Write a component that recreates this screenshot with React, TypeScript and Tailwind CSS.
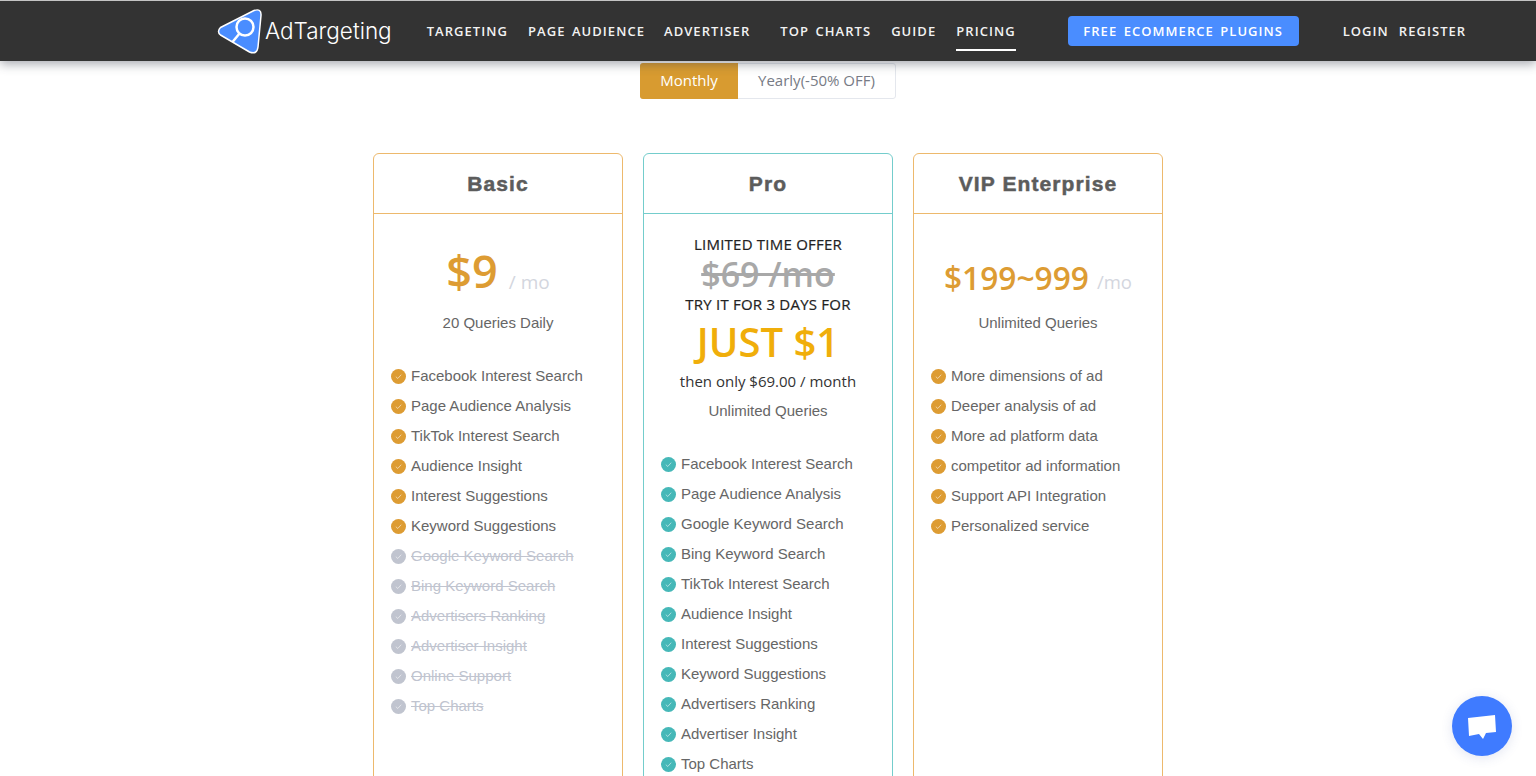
const navItems = [
  { label: "TARGETING", className: "" },
  { label: "PAGE AUDIENCE", className: "ml-[20px]" },
  { label: "ADVERTISER", className: "ml-[19px]" },
  { label: "TOP CHARTS", className: "ml-[30px]" },
  { label: "GUIDE", className: "ml-[20px]" },
];

const basicFeatures = [
  { text: "Facebook Interest Search" },
  { text: "Page Audience Analysis" },
  { text: "TikTok Interest Search" },
  { text: "Audience Insight" },
  { text: "Interest Suggestions" },
  { text: "Keyword Suggestions" },
  { text: "Google Keyword Search", off: true },
  { text: "Bing Keyword Search", off: true },
  { text: "Advertisers Ranking", off: true },
  { text: "Advertiser Insight", off: true },
  { text: "Online Support", off: true },
  { text: "Top Charts", off: true },
];

const proFeatures = [
  "Facebook Interest Search",
  "Page Audience Analysis",
  "Google Keyword Search",
  "Bing Keyword Search",
  "TikTok Interest Search",
  "Audience Insight",
  "Interest Suggestions",
  "Keyword Suggestions",
  "Advertisers Ranking",
  "Advertiser Insight",
  "Top Charts",
];

const vipFeatures = [
  "More dimensions of ad",
  "Deeper analysis of ad",
  "More ad platform data",
  "competitor ad information",
  "Support API Integration",
  "Personalized service",
];

const Logo = () => (
  <svg width="46" height="46" viewBox="0 0 46 46" className="shrink-0">
    <path
      d="M3.5 19.5 L37 2.5 Q44.5 0 44 7.5 L41 39 Q40 47 32.5 44 L3.5 27 Q-0.5 23.5 3.5 19.5 Z"
      fill="#4a8dff"
      stroke="#fff"
      strokeWidth="1.5"
      strokeLinejoin="round"
    />
    <circle cx="28" cy="19" r="8.5" fill="#4a8dff" stroke="#fff" strokeWidth="2.5" />
    <path d="M22.5 25.5 L15.5 34" stroke="#fff" strokeWidth="2.5" />
  </svg>
);

const Check = ({ className }: { className: string }) => (
  <span className={`flex h-[15px] w-[15px] shrink-0 items-center justify-center rounded-full ${className}`}>
    <svg width="9" height="9" viewBox="0 0 10 10" fill="none">
      <path d="M2 5.2 L4.2 7.2 L8 3" stroke="#fff" strokeOpacity="0.6" strokeWidth="1" />
    </svg>
  </span>
);

const Feature = ({ text, color, off }: { text: string; color: string; off?: boolean }) => (
  <li className="flex h-[30px] items-center">
    <Check className={off ? "bg-[#c0c4cf]" : color} />
    <span className={`ml-[5px] text-[15px] ${off ? "text-[#c0c4cf] line-through" : "text-[#666666]"}`}>
      {text}
    </span>
  </li>
);

const Card = ({
  title,
  border,
  children,
}: {
  title: string;
  border: string;
  children: React.ReactNode;
}) => (
  <div className={`h-[700px] w-[250px] rounded-[6px] border ${border}`}>
    <div
      className={`flex h-[60px] items-center justify-center border-b text-[21px] font-bold tracking-[1.1px] text-[#5c5c5c] [-webkit-text-stroke:0.5px_#5c5c5c] ${border}`}
    >
      {title}
    </div>
    {children}
  </div>
);

export default function App() {
  return (
    <div className="h-screen overflow-hidden bg-white font-['Liberation_Sans',sans-serif]">
      <header className="relative z-10 flex h-[61px] items-center border-t border-t-[#c4c4c4] bg-[#333333] pl-[217px] font-['Open_Sans',sans-serif] shadow-[0_3px_10px_rgba(60,64,80,0.45)]">
        <Logo />
        <span className="ml-[2px] font-['Inter',sans-serif] text-[22.5px] font-light text-white">AdTargeting</span>
        <nav className="ml-[35px] flex h-full items-center text-[13px] font-semibold tracking-[1.05px] text-[#f2f2f2] [word-spacing:2px]">
          {navItems.map((item) => (
            <a key={item.label} className={`pt-[2px] ${item.className}`}>
              {item.label}
            </a>
          ))}
          <a className="ml-[20px] flex h-[40px] items-center border-b-2 border-white pt-[4px]">PRICING</a>
          <a className="ml-[52px] flex h-[30px] w-[231px] items-center justify-center rounded-[4px] bg-[#4a8dff] pt-[2px] text-white">
            FREE ECOMMERCE PLUGINS
          </a>
          <a className="ml-[44px] pt-[2px]">LOGIN</a>
          <a className="ml-[10px] pt-[2px]">REGISTER</a>
        </nav>
      </header>

      <main className="flex flex-col items-center">
        <div className="mt-[2px] flex h-[36px] w-[256px] rounded-[3px] border border-[#e4e7ed] font-['Open_Sans',sans-serif] text-[15px] leading-[20px]">
          <div className="-my-px -ml-px flex w-[98px] items-center justify-center rounded-l-[3px] bg-[#d89b30] pb-[2px] text-white">
            Monthly
          </div>
          <div className="flex flex-1 items-center justify-center pb-[2px] text-[#777b85]">Yearly(-50% OFF)</div>
        </div>

        <div className="mt-[54px] flex gap-[20px]">
          <Card title="Basic" border="border-[#edb96d]">
            <div className="flex h-[87px] items-end justify-center font-['Open_Sans',sans-serif]">
              <span className="text-[45px] leading-[60px] font-semibold text-[#dd9c33]">$9</span>
              <span className="-mb-[5px] ml-[11px] self-end pb-[10px] text-[19px] leading-[28px] text-[#d3d6de]">/ mo</span>
            </div>
            <p className="mt-[12px] text-center text-[15px] leading-[20px] text-[#666666]">20 Queries Daily</p>
            <ul className="mt-[28px] pl-[17px]">
              {basicFeatures.map((f) => (
                <Feature key={f.text} text={f.text} off={f.off} color="bg-[#dd9c33]" />
              ))}
            </ul>
          </Card>

          <Card title="Pro" border="border-[#74cdcc]">
            <div className="flex flex-col items-center font-['Open_Sans',sans-serif]">
              <p className="mt-[20px] text-[15px] leading-[20px] tracking-[0.22px] text-[#222222] [-webkit-text-stroke:0.2px_#222222]">
                LIMITED TIME OFFER
              </p>
              <p className="text-[34px] leading-[40px] font-semibold text-[#a8a8a8] line-through">$69 /mo</p>
              <p className="text-[15px] leading-[20px] tracking-[0.22px] text-[#222222] [-webkit-text-stroke:0.2px_#222222]">
                TRY IT FOR 3 DAYS FOR
              </p>
              <p className="mt-[3px] text-[40px] leading-[50px] font-semibold text-[#f0ae0a]">JUST $1</p>
              <p className="mt-[2px] text-[15px] leading-[24px] text-[#333333]">then only $69.00 / month</p>
            </div>
            <p className="mt-[8px] text-center text-[15px] leading-[20px] text-[#666666]">Unlimited Queries</p>
            <ul className="mt-[28px] pl-[17px]">
              {proFeatures.map((f) => (
                <Feature key={f} text={f} color="bg-[#46b8b8]" />
              ))}
            </ul>
          </Card>

          <Card title="VIP Enterprise" border="border-[#edb96d]">
            <div className="flex h-[89px] items-end justify-center font-['Open_Sans',sans-serif]">
              <span className="text-[31.7px] leading-[50px] font-semibold text-[#dd9c33]">$199~999</span>
              <span className="mb-[1px] ml-[8px] pb-[6px] text-[18.5px] leading-[28px] text-[#d3d6de]">/mo</span>
            </div>
            <p className="mt-[10px] text-center text-[15px] leading-[20px] text-[#666666]">Unlimited Queries</p>
            <ul className="mt-[28px] pl-[17px]">
              {vipFeatures.map((f) => (
                <Feature key={f} text={f} color="bg-[#dd9c33]" />
              ))}
            </ul>
          </Card>
        </div>
      </main>

      <button className="fixed right-[24px] bottom-[20px] flex h-[60px] w-[60px] items-center justify-center rounded-full bg-[#3f7bff] shadow-[0_2px_12px_rgba(60,80,160,0.15)]">
        <svg width="30" height="26" viewBox="0 0 30 26">
          <path d="M1 5 L28 2 L29 19 L19 20 L16 26 L12 21 L2 23 Z" fill="#fff" />
        </svg>
      </button>
    </div>
  );
}
